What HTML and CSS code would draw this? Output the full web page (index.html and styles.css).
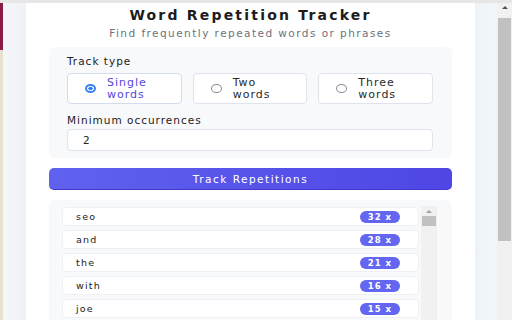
FILE: index.html
```html
<!DOCTYPE html>
<html lang="en">

<head>
    <meta charset="UTF-8">
    <meta name="viewport" content="width=device-width, initial-scale=1.0">
    <title>Word Repetition Tracker</title>
    <link rel="stylesheet" href="styles.css">
</head>

<body>
    <div class="site-edge"></div>
    <div class="gutter"></div>

    <div class="popup">
        <h1 class="title">Word Repetition Tracker</h1>
        <p class="subtitle">Find frequently repeated words or phrases</p>

        <div class="panel settings">
            <label class="field-label">Track type</label>
            <div class="options">
                <div class="option selected">
                    <span class="radio checked"></span>
                    <span class="option-text">Single<br>words</span>
                </div>
                <div class="option">
                    <span class="radio"></span>
                    <span class="option-text">Two<br>words</span>
                </div>
                <div class="option">
                    <span class="radio"></span>
                    <span class="option-text">Three<br>words</span>
                </div>
            </div>
            <label class="field-label">Minimum occurrences</label>
            <div class="input">2</div>
        </div>

        <button class="track-button">Track Repetitions</button>

        <div class="panel results">
            <ul class="result-list">
                <li><span class="word">seo</span><span class="count">32 x</span></li>
                <li><span class="word">and</span><span class="count">28 x</span></li>
                <li><span class="word">the</span><span class="count">21 x</span></li>
                <li><span class="word">with</span><span class="count">16 x</span></li>
                <li><span class="word">joe</span><span class="count">15 x</span></li>
            </ul>
            <div class="mini-scroll">
                <div class="mini-arrow"></div>
                <div class="mini-thumb"></div>
            </div>
        </div>
    </div>

    <div class="gutter right"></div>
    <div class="page-scroll">
        <div class="page-arrow"></div>
        <div class="page-thumb"></div>
    </div>
</body>

</html>
```

FILE: styles.css
```css
* {
    margin: 0;
    padding: 0;
    box-sizing: border-box;
}

body {
    display: flex;
    width: 512px;
    height: 320px;
    overflow: hidden;
    background-color: #f3f5f9;
    font-family: 'DejaVu Sans', Verdana, sans-serif;
    color: #1f1f1f;
}

.site-edge {
    width: 3px;
    background: linear-gradient(#e6e6e6 0 3px, #8a1c48 3px 50px, #e9e1cf 50px);
}

.gutter {
    width: 23px;
    border-top: 3px solid #e6e6e6;
    background: linear-gradient(90deg, #f5f6f9, #eef1f6);
}

.gutter.right {
    width: 22px;
    background: linear-gradient(90deg, #eef3f8, #f3f6f9);
}

.popup {
    width: 449px;
    background-color: #fff;
    border-top: 3px solid #e6e6e6;
    padding: 0 23px;
    display: flex;
    flex-direction: column;
}

.title {
    margin-top: 4px;
    text-align: center;
    font-size: 14px;
    font-weight: bold;
    letter-spacing: 2.2px;
    line-height: 16px;
    color: #1c1c1c;
}

.subtitle {
    margin-top: 3px;
    text-align: center;
    font-size: 10.5px;
    letter-spacing: 1.45px;
    line-height: 14px;
    color: #6b7280;
}

.panel {
    background-color: #f8f9fb;
    border-radius: 6px;
}

.settings {
    margin-top: 7px;
    padding: 7px 19px 7px 18px;
}

.field-label {
    display: block;
    font-size: 10.5px;
    letter-spacing: 1px;
    line-height: 14px;
    color: #222;
}

.options {
    display: grid;
    grid-template-columns: repeat(3, 1fr);
    gap: 11px;
    margin: 5px 0 9px;
}

.option {
    height: 31px;
    display: flex;
    align-items: center;
    background-color: #fff;
    border: 1px solid #dfe4ec;
    border-radius: 4px;
    padding-left: 17px;
}

.option.selected {
    border-color: #d6dcf0;
}

.radio {
    width: 11px;
    height: 9px;
    border: 1px solid #8a8f98;
    border-radius: 50%;
    margin-right: 11px;
    flex-shrink: 0;
}

.radio.checked {
    border: 2px solid #3b82f6;
    background: radial-gradient(#3b82f6 45%, #fff 50%);
}

.option-text {
    font-size: 11px;
    letter-spacing: 1px;
    line-height: 11.5px;
    color: #2a2a2a;
}

.selected .option-text {
    color: #5146e0;
}

.input {
    margin-top: 2px;
    height: 22px;
    background-color: #fff;
    border: 1px solid #dfe4ec;
    border-radius: 4px;
    padding-left: 15px;
    font-size: 10.5px;
    line-height: 20px;
    color: #222;
}

.track-button {
    margin-top: 10px;
    height: 22px;
    border: none;
    border-bottom: 1px solid #4338ca;
    border-radius: 5px;
    background: linear-gradient(90deg, #5f62ee, #4f46e5);
    color: #fff;
    font-family: inherit;
    font-size: 10.5px;
    letter-spacing: 1.5px;
    font-weight: normal;
}

.results {
    margin-top: 10px;
    flex: 1;
    padding: 7px 15px 0 13px;
    display: flex;
    gap: 2px;
    border-radius: 6px 6px 0 0;
}

.result-list {
    list-style: none;
    flex: 1;
    display: flex;
    flex-direction: column;
    gap: 4px;
}

.result-list li {
    height: 19px;
    flex-shrink: 0;
    display: flex;
    align-items: center;
    justify-content: space-between;
    background-color: #fff;
    border: 1px solid #edf0f4;
    border-radius: 4px;
    padding: 0 18px 0 13px;
}

.word {
    font-size: 9.5px;
    letter-spacing: 1.2px;
    color: #222;
}

.count {
    background-color: #6366f1;
    color: #fff;
    font-size: 8.5px;
    font-weight: bold;
    letter-spacing: 1px;
    line-height: 12px;
    padding: 0 8px;
    border-radius: 7px;
}

.mini-scroll {
    width: 16px;
    background-color: #f1f1f1;
    display: flex;
    flex-direction: column;
    align-items: center;
    margin-top: -1px;
}

.mini-arrow,
.page-arrow {
    width: 0;
    height: 0;
    margin: 4px 0 3px;
    border-left: 3px solid transparent;
    border-right: 3px solid transparent;
    border-bottom: 3px solid #a3a3a3;
}

.mini-thumb {
    width: 14px;
    height: 10px;
    background-color: #c1c1c1;
}

.page-scroll {
    width: 15px;
    background-color: #f1f1f1;
    border-top: 3px solid #e6e6e6;
    display: flex;
    flex-direction: column;
    align-items: center;
}

.page-arrow {
    margin: 3px 0 9px;
    border-bottom-color: #505050;
}

.page-thumb {
    width: 13px;
    height: 223px;
    background-color: #c1c1c1;
}
```
